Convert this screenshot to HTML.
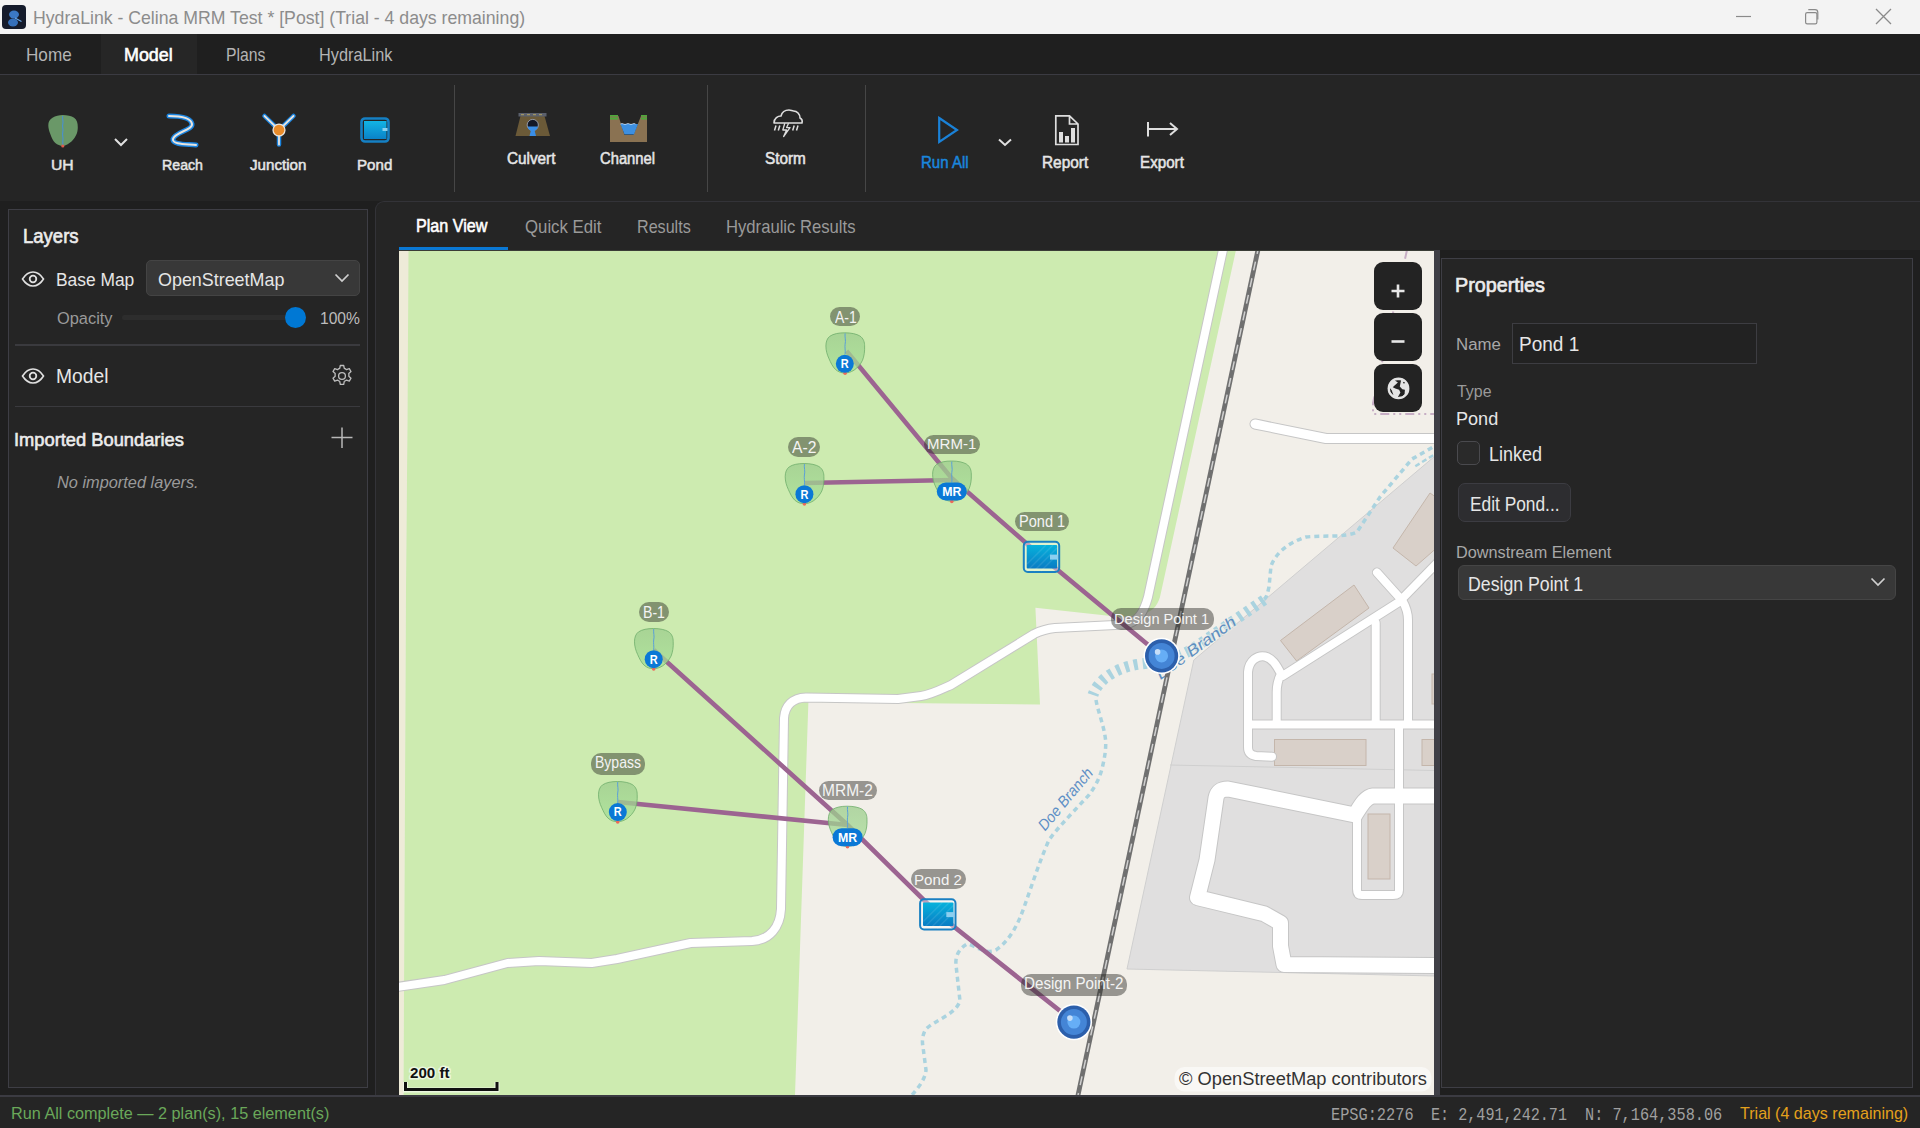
<!DOCTYPE html>
<html><head><meta charset="utf-8">
<style>
*{margin:0;padding:0;box-sizing:border-box}
html,body{width:1920px;height:1128px;overflow:hidden;background:#1f1f1f;font-family:"Liberation Sans",sans-serif}
.a{position:absolute}
.t{position:absolute;white-space:nowrap;line-height:1;transform-origin:0 0}
svg{position:absolute;overflow:visible}
</style></head><body>
<!-- title bar -->
<div class="a" style="left:0;top:0;width:1920px;height:34px;background:#f3f3f3"></div>
<svg style="left:2px;top:5px" width="24" height="24" viewBox="0 0 24 24">
<rect width="24" height="24" rx="4" fill="#151b2b"/>
<ellipse cx="12" cy="9.5" rx="5" ry="4" fill="#3b78c4"/>
<ellipse cx="11" cy="17.5" rx="5" ry="4" fill="#3570bb"/>
<path d="M13 13 L19.5 16.5" stroke="#6aa8e8" stroke-width="1.2"/>
</svg>
<div class="t" style="left:32.59px;top:8.74px;font-size:18.48px;font-weight:400;font-style:normal;color:#8c8c8c;font-family:'Liberation Sans',sans-serif;transform:scaleX(0.9570);">HydraLink - Celina MRM Test * [Post] (Trial - 4 days remaining)</div>
<svg style="left:1730px;top:4px" width="180" height="26" viewBox="0 0 180 26">
<path d="M6 12.5 H21" stroke="#8a8a8a" stroke-width="1.2"/>
<rect x="75.6" y="8.6" width="11.3" height="11.2" rx="1.6" fill="none" stroke="#8a8a8a" stroke-width="1.2"/><path d="M78.3 5.6 h6.7 a2.8 2.8 0 0 1 2.8 2.8 v7" fill="none" stroke="#8a8a8a" stroke-width="1.2"/>
<path d="M146 5 L161 20 M161 5 L146 20" stroke="#8a8a8a" stroke-width="1.3"/>
</svg>
<!-- menu bar -->
<div class="a" style="left:0;top:34px;width:1920px;height:40px;background:#1f1f1f"></div>
<div class="a" style="left:101px;top:34px;width:96px;height:40px;background:#262626"></div>
<div class="a" style="left:0;top:74px;width:1920px;height:1px;background:#3b3b42"></div>
<div class="t" style="left:25.93px;top:46.61px;font-size:17.75px;font-weight:400;font-style:normal;color:#b4b4b4;font-family:'Liberation Sans',sans-serif;transform:scaleX(0.9648);">Home</div><div class="t" style="left:124.22px;top:46.61px;font-size:17.75px;font-weight:400;font-style:normal;color:#ffffff;font-family:'Liberation Sans',sans-serif;transform:scaleX(1.0075);-webkit-text-stroke:0.57px #ffffff;">Model</div><div class="t" style="left:226.44px;top:46.61px;font-size:17.75px;font-weight:400;font-style:normal;color:#b4b4b4;font-family:'Liberation Sans',sans-serif;transform:scaleX(0.8856);">Plans</div><div class="t" style="left:318.69px;top:46.61px;font-size:17.75px;font-weight:400;font-style:normal;color:#b4b4b4;font-family:'Liberation Sans',sans-serif;transform:scaleX(0.9189);">HydraLink</div>
<!-- toolbar -->
<div class="a" style="left:0;top:75px;width:1920px;height:126px;background:#252525"></div>
<div class="a" style="left:453.5px;top:85px;width:1.3px;height:107px;background:#464646"></div>
<div class="a" style="left:706.5px;top:85px;width:1.3px;height:107px;background:#464646"></div>
<div class="a" style="left:864.5px;top:85px;width:1.3px;height:107px;background:#464646"></div>
<!-- UH -->
<svg style="left:47px;top:114px" width="32" height="34" viewBox="0 0 32 34">
<path d="M15.8 1 C20 1 24.5 2 27.1 3.8 C30 6 30.8 9 30.8 13.2 C30.8 16.5 30.2 19 28.9 21.6 C27 25.5 25 27.5 22.4 29.1 C20 30.8 18 32 15.8 32 C13 32 10.5 30.8 8.3 29.1 C6 27 4.5 23.5 3.2 19.75 C2 16.5 1.3 14 1.3 11.3 C1.3 8 2.5 5.5 5.5 3.8 C8.5 2 12 1 15.8 1 Z" fill="#6a9868"/>
<path d="M15.8 2 C14.8 5 16.8 7 15.8 10 C14.8 13 16.8 15 15.8 18 C14.8 21 16.8 24 15.8 27 L15.8 31" stroke="#4a90d0" stroke-width="1.1" fill="none"/>
<circle cx="15.8" cy="32" r="1.6" fill="#e05a4a"/>
</svg>
<svg style="left:112px;top:136px" width="18" height="12" viewBox="0 0 18 12"><path d="M3 3 L9 9 L15 3" stroke="#e0e0e0" stroke-width="2" fill="none"/></svg>
<!-- Reach -->
<svg style="left:163px;top:110px" width="40" height="40" viewBox="0 0 40 40">
<path d="M6 6 C18 6 28 8 29 14 C30 20 12 22 10 29 C9 35 24 34 33 35" stroke="#1a84e0" stroke-width="5" fill="none" stroke-linecap="round"/>
<path d="M6 6 C18 6 28 8 29 14 C30 20 12 22 10 29 C9 35 24 34 33 35" stroke="#e8e4de" stroke-width="2" fill="none" stroke-linecap="round"/>
</svg>
<!-- Junction -->
<svg style="left:259px;top:110px" width="40" height="40" viewBox="0 0 40 40">
<g stroke-linecap="round" fill="none"><path d="M5.5 6 L20 20 L34.5 6 M20 20 L20 34.5" stroke="#1a84e0" stroke-width="4.5"/>
<path d="M5.5 6 L20 20 L34.5 6 M20 20 L20 34.5" stroke="#e8e4de" stroke-width="1.8"/></g>
<circle cx="20" cy="20" r="6.6" fill="#e8e4de"/><circle cx="20" cy="20" r="5.3" fill="#e88b2a"/>
</svg>
<!-- Pond -->
<svg style="left:360px;top:117px" width="30" height="26" viewBox="0 0 30 26">
<defs><linearGradient id="pg" x1="0" y1="0" x2="0" y2="1"><stop offset="0" stop-color="#12b4e4"/><stop offset="1" stop-color="#0a82c8"/></linearGradient></defs>
<rect x="1.5" y="1.5" width="27" height="23" rx="3.5" fill="none" stroke="#1580c4" stroke-width="2.6"/>
<rect x="4" y="4" width="22.5" height="18" fill="url(#pg)"/>
<rect x="22.5" y="11" width="5" height="3" fill="#8ad0ee"/>
</svg>
<!-- Culvert -->
<svg style="left:514px;top:111px" width="38" height="27" viewBox="0 0 38 27">
<path d="M6.5 5 H30.5 L36 25 H1.5 Z" fill="#6b5a38"/>
<rect x="4.5" y="2" width="28" height="3.5" fill="#5b606c"/>
<path d="M7 3.7 h3 M13 3.7 h3 M19 3.7 h3 M25 3.7 h3" stroke="#b0a060" stroke-width="1"/>
<circle cx="18.75" cy="14" r="5.6" fill="#141826" stroke="#9aa0b0" stroke-width="0.9"/>
<path d="M13.6 15.5 H23.9 A5.2 5.2 0 0 1 13.6 15.5Z" fill="#3a8ee6"/>
<path d="M17 19 H20.5 L22 25 H15.5 Z" fill="#3a8ee6"/>
</svg>
<!-- Channel -->
<svg style="left:609px;top:113px" width="40" height="31" viewBox="0 0 40 31">
<path d="M1 3 H9.5 L15.5 22 H24.5 L32 3 H38 V29 H1 Z" fill="#8a7252"/>
<rect x="1" y="2" width="8" height="1.5" fill="#4caa3a"/><rect x="1" y="4.5" width="8" height="2" fill="#4caa3a"/>
<rect x="32" y="2" width="6" height="1.5" fill="#4caa3a"/><rect x="32" y="4.5" width="6" height="2" fill="#4caa3a"/>
<path d="M11.5 11 H29 L25 21.5 H15.5 Z" fill="#3d8fe0"/>
<path d="M11.5 11 q1.5 -1 3 0 t3 0 t3 0 t3 0 t3 0" stroke="#cfe6ff" stroke-width="0.8" fill="none"/>
</svg>
<!-- Storm -->
<svg style="left:771px;top:106px" width="34" height="34" viewBox="0 0 34 34">
<path d="M3 17 C3 12 7 10 10 10 C11 6 14 4 18 4 C20 4 21 5 22.5 5 C26 5 29 8 29 12 C31 13 31.5 15 31 17 Z" fill="none" stroke="#dedede" stroke-width="1.6" stroke-linejoin="round"/>
<path d="M5 19.5 L3.5 24.5 M8.8 19.5 L7.3 24.5 M23.2 19.5 L21.7 24.5 M27 19.5 L25.5 24.5" stroke="#dedede" stroke-width="1.5"/>
<path d="M13.8 17.3 L11.8 24 L15.6 24 L12.6 30.5 L19 21.6 L15.6 21.6 L17.6 17.3" fill="none" stroke="#dedede" stroke-width="1.3" stroke-linejoin="round"/>
</svg>
<!-- Run All -->
<svg style="left:936px;top:115px" width="26" height="30" viewBox="0 0 26 30"><path d="M3.2 3 L21 15 L3.2 27 Z" fill="none" stroke="#1a82d8" stroke-width="2.2"/></svg>
<svg style="left:996px;top:136px" width="18" height="12" viewBox="0 0 18 12"><path d="M3 3.5 L9 9 L15 3.5" stroke="#e0e0e0" stroke-width="2" fill="none"/></svg>
<!-- Report -->
<svg style="left:1052px;top:113px" width="30" height="34" viewBox="0 0 30 34">
<path d="M3.8 2.8 H17.5 L26 11 V31.5 H3.8 Z M17.5 2.8 V11 H26" fill="none" stroke="#dedede" stroke-width="1.7"/>
<rect x="7" y="19" width="4" height="10.5" fill="#dedede"/><rect x="13" y="23" width="4" height="6.5" fill="#dedede"/><rect x="19" y="15" width="4" height="14.5" fill="#dedede"/>
</svg>
<!-- Export -->
<svg style="left:1144px;top:118px" width="38" height="22" viewBox="0 0 38 22">
<path d="M4 4 V18.5 M4 11 H32 M26 5 L33 11 L26 17" fill="none" stroke="#dedede" stroke-width="2"/>
</svg>
<div class="t" style="left:51.17px;top:157.22px;font-size:15.51px;font-weight:400;font-style:normal;color:#e6e6e6;font-family:'Liberation Sans',sans-serif;transform:scaleX(1.0136);-webkit-text-stroke:0.50px #e6e6e6;">UH</div><div class="t" style="left:161.63px;top:157.22px;font-size:15.51px;font-weight:400;font-style:normal;color:#e6e6e6;font-family:'Liberation Sans',sans-serif;transform:scaleX(0.9152);-webkit-text-stroke:0.50px #e6e6e6;">Reach</div><div class="t" style="left:249.84px;top:157.22px;font-size:15.51px;font-weight:400;font-style:normal;color:#e6e6e6;font-family:'Liberation Sans',sans-serif;transform:scaleX(0.9780);-webkit-text-stroke:0.50px #e6e6e6;">Junction</div><div class="t" style="left:356.55px;top:157.22px;font-size:15.51px;font-weight:400;font-style:normal;color:#e6e6e6;font-family:'Liberation Sans',sans-serif;transform:scaleX(0.9755);-webkit-text-stroke:0.50px #e6e6e6;">Pond</div><div class="t" style="left:507.21px;top:151.47px;font-size:15.80px;font-weight:400;font-style:normal;color:#e6e6e6;font-family:'Liberation Sans',sans-serif;transform:scaleX(0.9684);-webkit-text-stroke:0.51px #e6e6e6;">Culvert</div><div class="t" style="left:600.04px;top:151.47px;font-size:15.80px;font-weight:400;font-style:normal;color:#e6e6e6;font-family:'Liberation Sans',sans-serif;transform:scaleX(0.9348);-webkit-text-stroke:0.51px #e6e6e6;">Channel</div><div class="t" style="left:765.17px;top:151.47px;font-size:15.80px;font-weight:400;font-style:normal;color:#e6e6e6;font-family:'Liberation Sans',sans-serif;transform:scaleX(0.9699);-webkit-text-stroke:0.51px #e6e6e6;">Storm</div><div class="t" style="left:921.36px;top:154.60px;font-size:15.65px;font-weight:400;font-style:normal;color:#1a86dc;font-family:'Liberation Sans',sans-serif;transform:scaleX(0.9613);-webkit-text-stroke:0.50px #1a86dc;">Run All</div><div class="t" style="left:1042.03px;top:154.60px;font-size:15.65px;font-weight:400;font-style:normal;color:#e6e6e6;font-family:'Liberation Sans',sans-serif;transform:scaleX(0.9835);-webkit-text-stroke:0.50px #e6e6e6;">Report</div><div class="t" style="left:1139.50px;top:154.60px;font-size:15.65px;font-weight:400;font-style:normal;color:#e6e6e6;font-family:'Liberation Sans',sans-serif;transform:scaleX(0.9707);-webkit-text-stroke:0.50px #e6e6e6;">Export</div>
<!-- left panel -->
<div class="a" style="left:8px;top:209px;width:360px;height:879px;background:#252525;border:1px solid #3e3e45"></div>
<div class="t" style="left:23.07px;top:226.92px;font-size:19.86px;font-weight:400;font-style:normal;color:#ececec;font-family:'Liberation Sans',sans-serif;transform:scaleX(0.9318);-webkit-text-stroke:0.64px #ececec;">Layers</div>
<svg style="left:21px;top:270px" width="24" height="18" viewBox="0 0 24 18"><path d="M1.5 9 C5 3.5 9 2 12 2 C15 2 19 3.5 22.5 9 C19 14.5 15 16 12 16 C9 16 5 14.5 1.5 9 Z" fill="none" stroke="#e0e0e0" stroke-width="1.6"/><circle cx="12" cy="9" r="3.3" fill="none" stroke="#e0e0e0" stroke-width="1.8"/></svg>
<div class="a" style="left:146px;top:260px;width:214px;height:36px;background:#383838;border:1px solid #444;border-radius:5px"></div>
<div class="t" style="left:56.41px;top:270.81px;font-size:18.70px;font-weight:400;font-style:normal;color:#e6e6e6;font-family:'Liberation Sans',sans-serif;transform:scaleX(0.9304);">Base Map</div><div class="t" style="left:157.98px;top:270.69px;font-size:18.84px;font-weight:400;font-style:normal;color:#e6e6e6;font-family:'Liberation Sans',sans-serif;transform:scaleX(0.9508);">OpenStreetMap</div>
<svg style="left:333px;top:271px" width="18" height="14" viewBox="0 0 18 14"><path d="M2.5 3.5 L9 10 L15.5 3.5" stroke="#cfcfcf" stroke-width="1.7" fill="none"/></svg>
<div class="t" style="left:57.14px;top:310.30px;font-size:16.23px;font-weight:400;font-style:normal;color:#9a9a9a;font-family:'Liberation Sans',sans-serif;transform:scaleX(1.0096);">Opacity</div>
<div class="a" style="left:122px;top:315px;width:175px;height:5px;background:#2d2d2d;border-radius:3px"></div>
<div class="a" style="left:284.7px;top:306.7px;width:21.4px;height:21.4px;background:#0078d4;border-radius:50%"></div>
<div class="t" style="left:320.21px;top:309.56px;font-size:17.10px;font-weight:400;font-style:normal;color:#bdbdbd;font-family:'Liberation Sans',sans-serif;transform:scaleX(0.9133);">100%</div>
<div class="a" style="left:15px;top:344px;width:345px;height:2px;background:#3a3a3e"></div>
<svg style="left:21px;top:367px" width="24" height="18" viewBox="0 0 24 18"><path d="M1.5 9 C5 3.5 9 2 12 2 C15 2 19 3.5 22.5 9 C19 14.5 15 16 12 16 C9 16 5 14.5 1.5 9 Z" fill="none" stroke="#e0e0e0" stroke-width="1.6"/><circle cx="12" cy="9" r="3.3" fill="none" stroke="#e0e0e0" stroke-width="1.8"/></svg>
<div class="t" style="left:56.26px;top:367.17px;font-size:19.57px;font-weight:400;font-style:normal;color:#e6e6e6;font-family:'Liberation Sans',sans-serif;transform:scaleX(0.9840);">Model</div>
<svg style="left:330px;top:364px" width="24" height="24" viewBox="0 0 24 24"><path d="M10.3 1.5 h3.4 l0.6 2.9 a8 8 0 0 1 2.2 1.3 l2.8 -1 l1.7 2.9 l-2.2 2 a8 8 0 0 1 0 2.6 l2.2 2 l-1.7 2.9 l-2.8 -1 a8 8 0 0 1 -2.2 1.3 l-0.6 2.9 h-3.4 l-0.6 -2.9 a8 8 0 0 1 -2.2 -1.3 l-2.8 1 l-1.7 -2.9 l2.2 -2 a8 8 0 0 1 0 -2.6 l-2.2 -2 l1.7 -2.9 l2.8 1 a8 8 0 0 1 2.2 -1.3 z" fill="none" stroke="#bdbdbd" stroke-width="1.3" stroke-linejoin="round"/><circle cx="12" cy="12" r="3.4" fill="none" stroke="#bdbdbd" stroke-width="1.3"/></svg>
<div class="a" style="left:15px;top:405.5px;width:345px;height:1.5px;background:#3a3a3e"></div>
<div class="t" style="left:13.55px;top:429.56px;font-size:18.99px;font-weight:400;font-style:normal;color:#ececec;font-family:'Liberation Sans',sans-serif;transform:scaleX(0.9638);-webkit-text-stroke:0.61px #ececec;">Imported Boundaries</div>
<svg style="left:330px;top:426px" width="24" height="24" viewBox="0 0 24 24"><path d="M12 1.5 V22 M1.5 11.5 H22.5" stroke="#b8b8b8" stroke-width="1.5"/></svg>
<div class="t" style="left:56.76px;top:473.98px;font-size:17.03px;font-weight:400;font-style:italic;color:#9a9a9a;font-family:'Liberation Sans',sans-serif;transform:scaleX(0.9602);">No imported layers.</div>
<!-- center panel -->
<div class="a" style="left:375px;top:201px;width:1545px;height:895px;background:#252525;border-left:1px solid #333338;border-top:1px solid #333338;border-radius:9px 0 0 0"></div>
<div class="t" style="left:416.17px;top:216.90px;font-size:18.12px;font-weight:400;font-style:normal;color:#ffffff;font-family:'Liberation Sans',sans-serif;transform:scaleX(0.8911);-webkit-text-stroke:0.58px #ffffff;">Plan View</div><div class="t" style="left:525.33px;top:218.62px;font-size:17.97px;font-weight:400;font-style:normal;color:#9a9a9a;font-family:'Liberation Sans',sans-serif;transform:scaleX(0.9345);">Quick Edit</div><div class="t" style="left:637.31px;top:218.62px;font-size:17.97px;font-weight:400;font-style:normal;color:#9a9a9a;font-family:'Liberation Sans',sans-serif;transform:scaleX(0.8974);">Results</div><div class="t" style="left:725.87px;top:218.62px;font-size:17.97px;font-weight:400;font-style:normal;color:#9a9a9a;font-family:'Liberation Sans',sans-serif;transform:scaleX(0.9271);">Hydraulic Results</div>
<div class="a" style="left:399px;top:247px;width:109px;height:3.5px;background:#0a78d4"></div>
<!-- map -->
<div class="a" style="left:399px;top:250px;width:1035px;height:845px;overflow:hidden">
<svg style="left:0;top:0" width="1035" height="845" viewBox="399 250 1035 845">
<defs>
<linearGradient id="leafg" x1="0" y1="0" x2="0" y2="1"><stop offset="0" stop-color="#9ccc8c" stop-opacity="0.75"/><stop offset="1" stop-color="#a6e096" stop-opacity="0.75"/></linearGradient>
<linearGradient id="pondg" x1="0" y1="0" x2="0" y2="1"><stop offset="0" stop-color="#06b2dc"/><stop offset="1" stop-color="#0a7cc4"/></linearGradient>
<radialGradient id="dpg" cx="0.5" cy="0.5" r="0.5"><stop offset="0" stop-color="#6ab2fa"/><stop offset="0.45" stop-color="#62a8f2"/><stop offset="0.5" stop-color="#4a8ad8"/><stop offset="1" stop-color="#4282d4"/></radialGradient>
<g id="leaf">
<path d="M19.2 0.5 C26 0.5 31 1.8 34 3.5 C38 6 39 10 39 13.5 C39.3 19 38.5 24 36.9 28 C35 32 32 35.5 28.4 37.9 C25 40 22 40.7 19.2 40.7 C15.5 40.7 12.5 39.5 9.9 37.2 C7 34.5 5 30 3.5 26.6 C1.5 22.5 0.3 18 0.3 13.8 C0.3 9.5 1.5 6 4.3 3.9 C8 1.5 13 0.5 19.2 0.5 Z" fill="url(#leafg)" stroke="#6fae6c" stroke-opacity="0.8" stroke-width="1"/>
<path d="M19.5 1 C19 5 20.5 8 19.5 12 C19 15 20 18 19.5 22" stroke="#5aa0d8" stroke-width="1" fill="none"/>
<circle cx="19.5" cy="41" r="1.8" fill="#ec6a5a"/>
</g>
<g id="rbadge"><circle cx="0" cy="0" r="9" fill="#0a78d6"/><text x="0" y="4.3" text-anchor="middle" font-family="Liberation Sans" font-weight="700" font-size="12" fill="#fff" transform="scale(0.92,1)">R</text></g>
<g id="mrbadge"><rect x="-15" y="-9" width="30" height="18" rx="9" fill="#0a78d6"/><text x="0" y="4.8" text-anchor="middle" font-family="Liberation Sans" font-weight="700" font-size="13" fill="#fff" transform="scale(0.95,1)">MR</text></g>
<g id="pond">
<rect x="1.8" y="1.8" width="35.4" height="30.1" rx="4" fill="#ffffff" fill-opacity="0.4" stroke="#1a80c2" stroke-width="2"/>
<rect x="4.7" y="5" width="30.5" height="23.5" rx="1" fill="url(#pondg)"/>
<path d="M5 24 L24 5 M5 31 L31 5 M12 31 L35 8 M19 31 L35 15" stroke="#ffffff" stroke-opacity="0.1" stroke-width="1.5"/>
<rect x="28" y="14.6" width="8" height="5" fill="#8ccff0"/>
</g>
<g id="dp">
<circle r="18.2" fill="#fff"/>
<circle r="16.6" fill="#2c5fab"/>
<circle r="13" fill="#4485d6"/>
<circle r="6.5" fill="#66aef6"/>
<circle cx="-4" cy="-4" r="2.8" fill="#c6def8"/>
</g>
</defs>
<!-- land -->
<rect x="399" y="250" width="1035" height="845" fill="#f2efe9"/>
<!-- grass -->
<path d="M399 250 L409 250 L407.5 419 L406 587 L403.5 1095 L399 1095 Z" fill="#eeebd8"/>
<path d="M408.5 250 L1236 250 L1160 597 C1157 607 1152 612 1140 615 L1120 617 L1035.4 607.7 L1040 704.5 L808.4 702 L795 1095 L403.5 1095 L406 587 L407.5 419 Z" fill="#cdebb0"/>
<!-- residential -->
<path d="M1193.8 660 L1435 456 L1435 976 L1127 969 Z" fill="#e0dfdf" stroke="#cfcfcf" stroke-width="1"/>
<path d="M1170 765 L1435 770.5" stroke="#cfcfcf" stroke-width="1"/>
<!-- buildings -->
<g fill="#d9d0c9" stroke="#c4b6ab" stroke-width="1">
<path d="M1280.5 640.5 L1354 585 L1369 608 L1296.6 661 Z"/>
<path d="M1393 548 L1430 493 L1440 500 L1440 545 L1416 566 Z"/>
<rect x="1274.5" y="739.5" width="91.5" height="26"/>
<rect x="1422" y="739.5" width="20" height="26"/>
<rect x="1368" y="814" width="22" height="65"/>
<rect x="1432" y="674" width="8" height="30"/>
</g>
<!-- roads casing -->
<g fill="none" stroke="#c6c6c6" stroke-linejoin="round" stroke-linecap="round">
<path stroke-width="10" d="M1224 245 L1148 597 C1144 612 1138 622 1125 624.5 L1055 628 C1045 629 1040 631 1034 634 L951 685 C940 690 930 695 921 696 L898 699 L806 697.5 C792 698 785 706 784 718 L781 909 C780 927 770 940 752 941 L690.6 943 L617 959 L591.7 963 L539 961 L507.5 963 L444.4 980 L390 988"/>
<path stroke-width="11" d="M1255 424 L1326 438.5 L1440 438.5"/>
<path stroke-width="10" d="M1440 560 L1399 602 L1282.5 676 M1377 572.5 L1402.6 601 C1406 607 1408 613 1408 620 L1408 724.5 M1375.7 623 L1375.7 724.5 M1248 724.5 L1440 724.5 M1272 756.7 L1256 756 C1250 755 1248 752 1248 747 L1248 672 C1249 660 1258 655 1265 656.5 C1272 658 1276 664 1281 673.8 C1277 682 1276.7 686 1276.7 692 L1276.7 724.5 M1399 724.5 L1399 890 C1399 894 1397 895 1393 895 L1362 895 C1358 895 1357 893 1357 889 L1357 815"/>
<path stroke-width="17" d="M1440 796 L1373 796 C1365 797 1360 807 1355 815 L1228 789 C1220 789 1217 793 1216 798 L1207 860 L1197.5 897.6 L1264 913.7 L1280.5 923 L1280.5 946 L1284 964.5 L1440 965.6"/>
</g>
<g fill="none" stroke="#ffffff" stroke-linejoin="round" stroke-linecap="round">
<path stroke-width="8" d="M1224 245 L1148 597 C1144 612 1138 622 1125 624.5 L1055 628 C1045 629 1040 631 1034 634 L951 685 C940 690 930 695 921 696 L898 699 L806 697.5 C792 698 785 706 784 718 L781 909 C780 927 770 940 752 941 L690.6 943 L617 959 L591.7 963 L539 961 L507.5 963 L444.4 980 L390 988"/>
<path stroke-width="9" d="M1255 424 L1326 438.5 L1440 438.5"/>
<path stroke-width="8" d="M1440 560 L1399 602 L1282.5 676 M1377 572.5 L1402.6 601 C1406 607 1408 613 1408 620 L1408 724.5 M1375.7 623 L1375.7 724.5 M1248 724.5 L1440 724.5 M1272 756.7 L1256 756 C1250 755 1248 752 1248 747 L1248 672 C1249 660 1258 655 1265 656.5 C1272 658 1276 664 1281 673.8 C1277 682 1276.7 686 1276.7 692 L1276.7 724.5 M1399 724.5 L1399 890 C1399 894 1397 895 1393 895 L1362 895 C1358 895 1357 893 1357 889 L1357 815"/>
<path stroke-width="15" d="M1440 796 L1373 796 C1365 797 1360 807 1355 815 L1228 789 C1220 789 1217 793 1216 798 L1207 860 L1197.5 897.6 L1264 913.7 L1280.5 923 L1280.5 946 L1284 964.5 L1440 965.6"/>
</g>
<!-- admin boundary -->
<path d="M1407 250 L1373 403 L1373 414 L1440 414" fill="none" stroke="#b898b8" stroke-opacity="0.75" stroke-width="2" stroke-dasharray="9 4 2 4 2 4"/>
<!-- streams -->
<g fill="none" stroke="#aad3df" stroke-linecap="butt">
<path stroke-width="3.5" stroke-dasharray="5 4" d="M1440 443 L1412 459 L1380 497 L1357 532 C1345 538 1325 535 1306 537 C1290 542 1276 552 1271 566 L1269 587 C1267 595 1267 598 1262 601"/>
<path stroke-width="2.5" stroke-dasharray="5 3" d="M1440 451 L1414 467"/>
<path stroke-width="11" stroke-dasharray="4 5" d="M1264 600 L1194 648 C1180 657 1162 662 1140 664 C1125 666 1112 672 1104 679 C1098 685 1095 689 1093 695"/>
<path stroke-width="3.5" stroke-dasharray="5 4" d="M1096 700 C1098 712 1104 725 1105.7 741 C1106 752 1104 760 1102 769 C1099 780 1094 788 1089 795 L1073 812 C1064 822 1056 830 1049 840 C1040 860 1032 885 1025 904.5 C1018 925 1010 940 996 950 C985 955 975 945 967 944 C960 948 955 955 956 965 L960 1001 C955 1015 935 1020 926 1029 C922 1035 922 1042 923 1047 L926 1070 C925 1080 918 1088 912 1095"/>
</g>
<text x="0" y="0" transform="translate(1069.5 802.5) rotate(-50)" text-anchor="middle" font-family="Liberation Sans" font-style="italic" font-size="15.5" fill="#5f90c6" textLength="76" lengthAdjust="spacingAndGlyphs">Doe Branch</text>
<text x="0" y="0" transform="translate(1199 652) rotate(-36)" text-anchor="middle" font-family="Liberation Sans" font-style="italic" font-size="15.5" fill="#5d8ec0" stroke="#f2efe9" stroke-width="2.5" stroke-opacity="0.5" paint-order="stroke" textLength="95" lengthAdjust="spacingAndGlyphs">Doe Branch</text>
<!-- railway -->
<path d="M1259 245 L1077 1100" stroke="#707070" stroke-width="4.8" fill="none"/>
<path d="M1259 245 L1077 1100" stroke="#f0f0f0" stroke-width="1.5" stroke-dasharray="9 8" fill="none" stroke-opacity="0.75"/>
<!-- model links -->
<g stroke="#9c6491" stroke-width="4.6" fill="none" stroke-linecap="butt">
<path d="M846.5 351 L951.5 478 L1042 557 L1161.6 656"/>
<path d="M805 483 L953 480"/>
<path d="M653.7 650 L847.6 825 L938 914 L1074 1022"/>
<path d="M618 802 L847.6 825"/>
</g>
<!-- subbasins -->
<use href="#leaf" transform="translate(825.6 332.3)"/>
<use href="#leaf" transform="translate(784.9 463)"/>
<use href="#leaf" transform="translate(932.3 460.5)"/>
<use href="#leaf" transform="translate(634.2 628)"/>
<use href="#leaf" transform="translate(598.2 781)"/>
<use href="#leaf" transform="translate(828 805.7)"/>
<use href="#rbadge" transform="translate(844.8 363.8)"/>
<use href="#rbadge" transform="translate(804.4 494.2)"/>
<use href="#rbadge" transform="translate(653.7 659.2)"/>
<use href="#rbadge" transform="translate(617.8 812.1)"/>
<use href="#mrbadge" transform="translate(951.8 491.5)"/>
<use href="#mrbadge" transform="translate(847.6 837.2)"/>
<!-- ponds -->
<use href="#pond" transform="translate(1022 540)"/>
<use href="#pond" transform="translate(918.3 897.5)"/>
<!-- design points -->
<use href="#dp" transform="translate(1161.6 655.9)"/>
<use href="#dp" transform="translate(1073.9 1022.1)"/>
<!-- scale bar -->
<path d="M405.5 1082 V1090 H497 V1082" fill="none" stroke="#fff" stroke-width="5" stroke-opacity="0.6"/>
<path d="M405.5 1082 V1089.5 H497 V1082" fill="none" stroke="#111" stroke-width="3"/>
<text x="410" y="1078" font-family="Liberation Sans" font-weight="700" font-size="15" fill="#111" stroke="#fff" stroke-width="3" stroke-opacity="0.6" paint-order="stroke" textLength="39.5" lengthAdjust="spacingAndGlyphs">200 ft</text>
<!-- attribution -->
<rect x="1174.5" y="1067" width="257" height="24.5" rx="10" fill="#ffffff" fill-opacity="0.55"/>
<text x="1179" y="1085" font-family="Liberation Sans" font-size="18.3" fill="#333" textLength="248" lengthAdjust="spacingAndGlyphs">© OpenStreetMap contributors</text>
</svg>

</div>
<div class="a" style="left:399px;top:250px;width:1035px;height:1px;background:#3a3d36"></div>
<div class="a" style="left:829.9px;top:307.0px;width:30.5px;height:19.2px;border-radius:10px;background:rgba(40,40,36,0.45)"></div>
<div class="t" style="left:834.50px;top:309.85px;font-size:15.94px;font-weight:400;font-style:normal;color:#f4f4f4;font-family:'Liberation Sans',sans-serif;transform:scaleX(0.8807);">A-1</div>
<div class="a" style="left:788.4px;top:437.4px;width:31.6px;height:19.6px;border-radius:10px;background:rgba(40,40,36,0.45)"></div>
<div class="t" style="left:792.30px;top:439.85px;font-size:15.94px;font-weight:400;font-style:normal;color:#f4f4f4;font-family:'Liberation Sans',sans-serif;transform:scaleX(0.9887);">A-2</div>
<div class="a" style="left:924.4px;top:434.6px;width:55.4px;height:19.5px;border-radius:10px;background:rgba(40,40,36,0.45)"></div>
<div class="t" style="left:927.20px;top:436.91px;font-size:14.93px;font-weight:400;font-style:normal;color:#f4f4f4;font-family:'Liberation Sans',sans-serif;transform:scaleX(1.0077);">MRM-1</div>
<div class="a" style="left:1015.3px;top:511.7px;width:53.6px;height:19.5px;border-radius:10px;background:rgba(40,40,36,0.45)"></div>
<div class="t" style="left:1019.43px;top:514.45px;font-size:15.94px;font-weight:400;font-style:normal;color:#f4f4f4;font-family:'Liberation Sans',sans-serif;transform:scaleX(0.9152);">Pond 1</div>
<div class="a" style="left:1110.8px;top:607.6px;width:102.9px;height:22.4px;border-radius:10px;background:rgba(40,40,36,0.45)"></div>
<div class="t" style="left:1114.43px;top:611.02px;font-size:15.51px;font-weight:400;font-style:normal;color:#f4f4f4;font-family:'Liberation Sans',sans-serif;transform:scaleX(0.9434);">Design Point 1</div>
<div class="a" style="left:639.1px;top:602.4px;width:29.5px;height:19.2px;border-radius:10px;background:rgba(40,40,36,0.45)"></div>
<div class="t" style="left:642.97px;top:604.85px;font-size:15.94px;font-weight:400;font-style:normal;color:#f4f4f4;font-family:'Liberation Sans',sans-serif;transform:scaleX(0.8861);">B-1</div>
<div class="a" style="left:591.0px;top:752.5px;width:53.9px;height:22.3px;border-radius:10px;background:rgba(40,40,36,0.45)"></div>
<div class="t" style="left:594.78px;top:754.38px;font-size:16.38px;font-weight:400;font-style:normal;color:#f4f4f4;font-family:'Liberation Sans',sans-serif;transform:scaleX(0.8574);">Bypass</div>
<div class="a" style="left:818.5px;top:780.5px;width:58.2px;height:19.2px;border-radius:10px;background:rgba(40,40,36,0.45)"></div>
<div class="t" style="left:821.86px;top:782.55px;font-size:15.94px;font-weight:400;font-style:normal;color:#f4f4f4;font-family:'Liberation Sans',sans-serif;transform:scaleX(0.9734);">MRM-2</div>
<div class="a" style="left:910.6px;top:869.0px;width:55.2px;height:19.6px;border-radius:10px;background:rgba(40,40,36,0.45)"></div>
<div class="t" style="left:913.79px;top:871.82px;font-size:15.51px;font-weight:400;font-style:normal;color:#f4f4f4;font-family:'Liberation Sans',sans-serif;transform:scaleX(0.9747);">Pond 2</div>
<div class="a" style="left:1020.9px;top:973.9px;width:106.3px;height:22.6px;border-radius:10px;background:rgba(40,40,36,0.45)"></div>
<div class="t" style="left:1024.19px;top:975.87px;font-size:15.80px;font-weight:400;font-style:normal;color:#f4f4f4;font-family:'Liberation Sans',sans-serif;transform:scaleX(0.9604);">Design Point-2</div>
<!-- map controls -->
<div class="a" style="left:1374px;top:262px;width:48px;height:47.5px;background:#232323;border-radius:9px"></div>
<div class="a" style="left:1374px;top:313px;width:48px;height:47.5px;background:#232323;border-radius:9px"></div>
<div class="a" style="left:1374px;top:364px;width:48px;height:47.5px;background:#232323;border-radius:9px"></div>
<svg style="left:1374px;top:262px" width="48" height="150" viewBox="0 0 48 150">
<path d="M24 22.5 V35.5 M17.5 29 H30.5" stroke="#e6e6e6" stroke-width="2.6"/>
<path d="M17.5 79.5 H30.5" stroke="#e6e6e6" stroke-width="2.6"/>
<g transform="translate(24.5 126.4)"><circle r="10.9" fill="#e4e4e4"/>
<path d="M-4.1 -8.1 L2.6 -8.1 L1.9 -4.9 L1.3 -1.8 L3.8 0.8 L6.4 1.4 L6.1 5.9 L3.8 8.1 L-0.6 8.5 L1.9 4 L0.6 1.4 L-3.2 0.2 L-5.7 -1.1 L-4.5 -2.4 L-0.6 -5.9 Z" fill="#232323"/>
<path d="M-8.6 -0.5 L-6.7 2.1 L-5.1 6.5 L-6.4 5.9 L-8.3 3.4 Z" fill="#232323"/>
<circle cx="5.5" cy="-5.8" r="0.9" fill="#232323"/>
<circle r="9.6" fill="none" stroke="#e4e4e4" stroke-width="1.8"/></g>
</svg>
<!-- props -->
<div class="a" style="left:1434px;top:250px;width:6px;height:846px;background:#3f3f46"></div>
<div class="a" style="left:1440px;top:250px;width:480px;height:846px;background:#1f1f1f"></div>
<div class="a" style="left:1441px;top:258px;width:472px;height:830px;background:#252525;border:1px solid #3e3e45"></div>
<div class="t" style="left:1455.37px;top:275.41px;font-size:20.58px;font-weight:400;font-style:normal;color:#ececec;font-family:'Liberation Sans',sans-serif;transform:scaleX(0.9591);-webkit-text-stroke:0.66px #ececec;">Properties</div><div class="t" style="left:1455.65px;top:336.26px;font-size:17.10px;font-weight:400;font-style:normal;color:#a8a8a8;font-family:'Liberation Sans',sans-serif;transform:scaleX(0.9855);">Name</div>
<div class="a" style="left:1512px;top:323px;width:245px;height:41px;background:#222;border:1.5px solid #3d3d42"></div>
<div class="t" style="left:1518.88px;top:334.41px;font-size:20.58px;font-weight:400;font-style:normal;color:#e6e6e6;font-family:'Liberation Sans',sans-serif;transform:scaleX(0.9245);">Pond 1</div><div class="t" style="left:1456.68px;top:384.11px;font-size:16.81px;font-weight:400;font-style:normal;color:#9a9a9a;font-family:'Liberation Sans',sans-serif;transform:scaleX(0.9492);">Type</div><div class="t" style="left:1455.55px;top:409.42px;font-size:19.28px;font-weight:400;font-style:normal;color:#e6e6e6;font-family:'Liberation Sans',sans-serif;transform:scaleX(0.9389);">Pond</div>
<div class="a" style="left:1457px;top:441px;width:23px;height:23.5px;background:#2a2a2a;border:1.5px solid #4a4a4e;border-radius:5px"></div>
<div class="t" style="left:1488.76px;top:444.82px;font-size:19.86px;font-weight:400;font-style:normal;color:#e6e6e6;font-family:'Liberation Sans',sans-serif;transform:scaleX(0.9049);">Linked</div>
<div class="a" style="left:1457.5px;top:483.4px;width:113.3px;height:38.3px;background:#2d2d30;border:1px solid #3c3c42;border-radius:7px"></div>
<div class="t" style="left:1469.51px;top:494.08px;font-size:20.14px;font-weight:400;font-style:normal;color:#e6e6e6;font-family:'Liberation Sans',sans-serif;transform:scaleX(0.8604);">Edit Pond...</div><div class="t" style="left:1456.20px;top:544.14px;font-size:17.25px;font-weight:400;font-style:normal;color:#a8a8a8;font-family:'Liberation Sans',sans-serif;transform:scaleX(0.9418);">Downstream Element</div>
<div class="a" style="left:1457.5px;top:565.3px;width:438px;height:35px;background:#383838;border:1px solid #454545;border-radius:6px"></div>
<div class="t" style="left:1467.58px;top:574.28px;font-size:20.14px;font-weight:400;font-style:normal;color:#e6e6e6;font-family:'Liberation Sans',sans-serif;transform:scaleX(0.8795);">Design Point 1</div>
<svg style="left:1869px;top:575px" width="18" height="14" viewBox="0 0 18 14"><path d="M2.5 3.5 L9 10 L15.5 3.5" stroke="#cfcfcf" stroke-width="1.7" fill="none"/></svg>
<!-- status -->
<div class="a" style="left:0;top:1095px;width:1920px;height:1.5px;background:#3b3b42"></div>
<div class="a" style="left:0;top:1096.5px;width:1920px;height:31.5px;background:#252525"></div>
<div class="t" style="left:11.10px;top:1104.94px;font-size:17.25px;font-weight:400;font-style:normal;color:#6aa85a;font-family:'Liberation Sans',sans-serif;transform:scaleX(0.9406);">Run All complete — 2 plan(s), 15 element(s)</div><div class="t" style="left:1331.43px;top:1105.88px;font-size:18.18px;font-weight:400;font-style:normal;color:#a0a0a0;font-family:'Liberation Mono',monospace;transform:scaleX(0.8411);">EPSG:2276</div><div class="t" style="left:1431.44px;top:1105.88px;font-size:18.18px;font-weight:400;font-style:normal;color:#a0a0a0;font-family:'Liberation Mono',monospace;transform:scaleX(0.8314);">E: 2,491,242.71</div><div class="t" style="left:1585.18px;top:1105.88px;font-size:18.18px;font-weight:400;font-style:normal;color:#a0a0a0;font-family:'Liberation Mono',monospace;transform:scaleX(0.8391);">N: 7,164,358.06</div><div class="t" style="left:1739.98px;top:1104.92px;font-size:17.39px;font-weight:400;font-style:normal;color:#e4a11c;font-family:'Liberation Sans',sans-serif;transform:scaleX(0.9250);">Trial (4 days remaining)</div>
</body></html>
